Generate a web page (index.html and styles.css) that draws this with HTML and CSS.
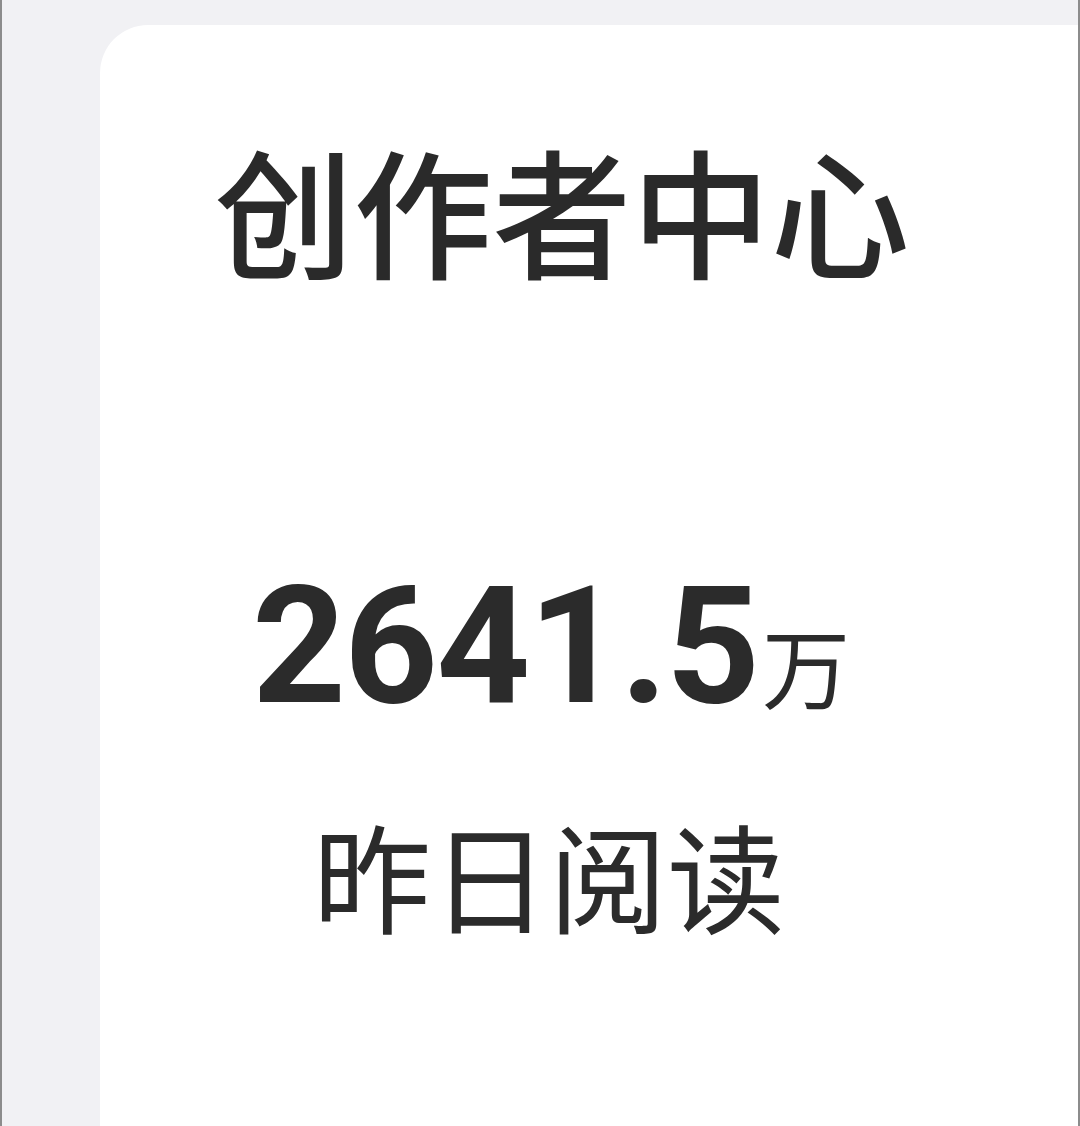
FILE: index.html
```html
<!DOCTYPE html>
<html lang="zh-CN">
<head>
<meta charset="utf-8">
<link rel="stylesheet" href="styles.css">
</head>
<body>
<div class="screen">
  <div class="card">
    <h1 class="title">创作者中心</h1>
    <div class="stat">
      <div class="value"><span class="num">2641.5</span><span class="unit">万</span></div>
      <div class="label">昨日阅读</div>
    </div>
  </div>
</div>
</body>
</html>
```
FILE: styles.css
```css
html, body {
  margin: 0;
  padding: 0;
  height: 100%;
}
body {
  background: #f1f1f4;
  font-family: "Noto Sans CJK SC", "Noto Sans", sans-serif;
  color: #2b2b2b;
}
.screen {
  height: 1126px;
  box-sizing: border-box;
  border-left: 2px solid #8c8c8c;
  border-right: 2px solid #8c8c8c;
  padding: 25px 0 0 98px;
  overflow: hidden;
}
.card {
  background: #fff;
  border-top-left-radius: 48px;
  height: 1200px;
  box-sizing: border-box;
  padding: 0 70px 0 0;
  display: flex;
  flex-direction: column;
  align-items: center;
}
.title {
  margin: 113px 0 0 16px;
  font-size: 139px;
  line-height: 1;
  font-weight: 500;
  letter-spacing: 0;
  color: #2a2a2a;
}
.stat {
  margin-top: 287px;
  display: flex;
  flex-direction: column;
  align-items: center;
}
.value {
  display: flex;
  align-items: baseline;
  line-height: 1;
  margin-right: 6px;
}
.num {
  font-family: Roboto, "Noto Sans", sans-serif;
  font-weight: 700;
  font-size: 164px;
  letter-spacing: -2px;
  color: #2b2b2b;
}
.unit {
  font-size: 88px;
  font-weight: 400;
  margin-left: 4px;
}
.label {
  margin: 87px 10px 0 0;
  font-size: 118px;
  line-height: 1;
  font-weight: 400;
  color: #2b2b2b;
}
```
